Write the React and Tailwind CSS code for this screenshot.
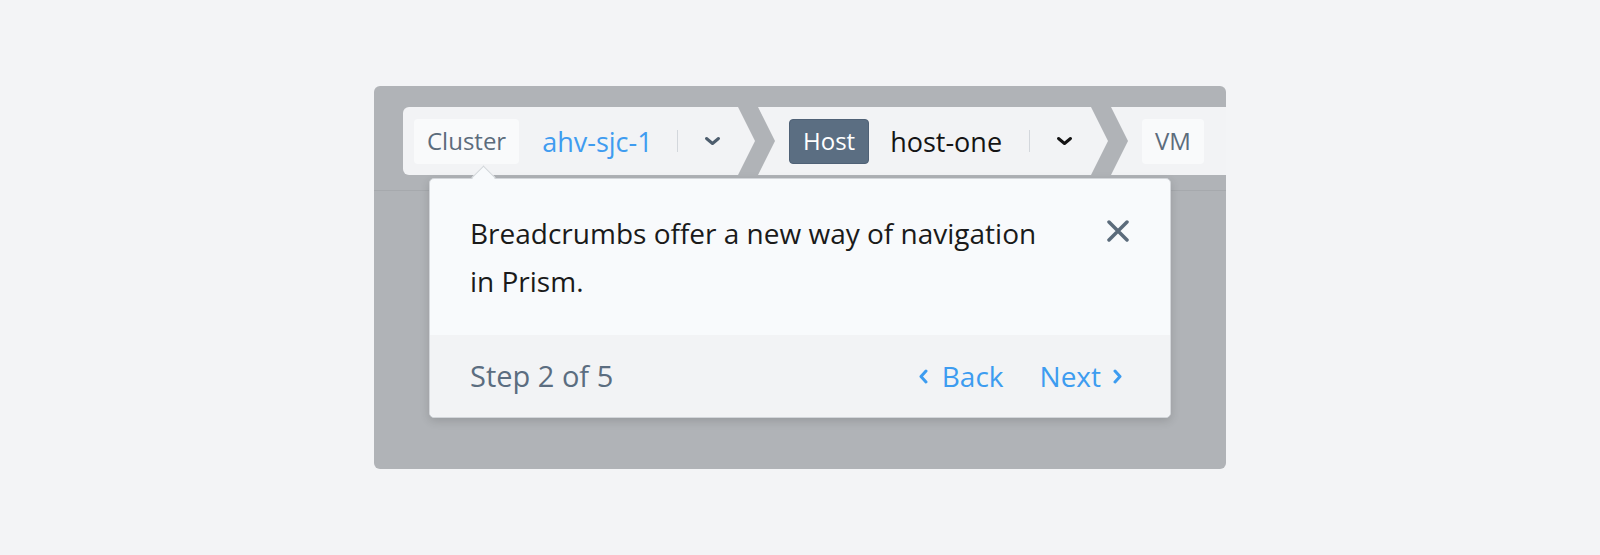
import React from 'react';

function ChevronDown({ className }) {
  return (
    <svg viewBox="0 0 17 10" className={className} fill="none" stroke="currentColor" strokeWidth="3" strokeLinecap="round" strokeLinejoin="round">
      <path d="M2.5 2.5 L8.5 7.5 L14.5 2.5" />
    </svg>
  );
}

function ChevronSide({ dir, className }) {
  return (
    <svg viewBox="0 0 11 15" className={className} fill="none" stroke="currentColor" strokeWidth="3" strokeLinecap="round" strokeLinejoin="round">
      {dir === 'left' ? <path d="M8 2 L3 7.5 L8 13" /> : <path d="M3 2 L8 7.5 L3 13" />}
    </svg>
  );
}

function CloseIcon({ className }) {
  return (
    <svg viewBox="0 0 22 22" className={className} fill="none" stroke="currentColor" strokeWidth="3.5" strokeLinecap="round">
      <path d="M2 2 L20 20 M20 2 L2 20" />
    </svg>
  );
}

export default function App() {
  return (
    <div className="w-full h-[555px] bg-[#f3f4f6] flex items-center justify-center font-['Open_Sans',sans-serif]">
      <div className="relative w-[852px] h-[383px] bg-[#b0b3b7] rounded-[6px] overflow-hidden">
        {/* header with breadcrumbs */}
        <div className="h-[105px] border-b border-[#a6a9ad] pt-[21px] pl-[29px]">
          <div className="flex h-[68px]">
            <div className="shrink-0 w-[352px] h-[68px] bg-[#f2f3f5] rounded-l-[6px] flex items-center pl-[11px] [clip-path:polygon(0_0,335px_0,352px_34px,335px_68px,0_68px)]">
              <span className="h-[45px] px-[13px] flex items-center rounded-[4px] bg-[#f9fafb] text-[24px] text-[#5c6c7c]">Cluster</span>
              <span className="ml-[23px] text-[27px] leading-none text-[#3f9cf0]">ahv-sjc-1</span>
              <span className="ml-[24px] w-px h-[22px] bg-[#d3d7dc]" />
              <ChevronDown className="ml-[26px] w-[17px] h-[10px] text-[#4d5d6d]" />
            </div>
            <div className="shrink-0 ml-[3px] w-[350px] h-[68px] bg-[#f2f3f5] flex items-center pl-[31px] [clip-path:polygon(0_0,333px_0,350px_34px,333px_68px,0_68px,17px_34px)]">
              <span className="h-[45px] px-[13px] flex items-center rounded-[4px] bg-[#5b6e82] border border-[#4f6176] text-[24px] text-white">Host</span>
              <span className="ml-[21px] text-[27px] leading-none text-[#141414]">host-one</span>
              <span className="ml-[27px] w-px h-[22px] bg-[#d3d7dc]" />
              <ChevronDown className="ml-[26px] w-[17px] h-[10px] text-[#141414]" />
            </div>
            <div className="shrink-0 ml-[3px] w-[200px] h-[68px] bg-[#f2f3f5] flex items-center pl-[31px] [clip-path:polygon(0_0,200px_0,200px_68px,0_68px,17px_34px)]">
              <span className="h-[45px] px-[13px] flex items-center rounded-[4px] bg-[#f9fafb] text-[24px] text-[#5c6c7c]">VM</span>
            </div>
          </div>
        </div>

        {/* popover */}
        <div className="absolute left-[55px] top-[92px] w-[742px] bg-[#f8fafc] border border-[#d3d6da] rounded-[5px] shadow-[0_3px_10px_rgba(0,0,0,0.14)]">
          <div className="absolute left-[45px] top-[-10px] w-[17px] h-[17px] rotate-45 bg-[#f8fafc] border-l border-t border-[#d3d6da]" />
          <div className="relative flex justify-between h-[156px] pl-[40px] pr-[41px] pt-[30px]">
            <p className="w-[578px] text-[28px] leading-[48px] text-[#1a1a1a]">Breadcrumbs offer a new way of navigation in Prism.</p>
            <button className="mt-[11px] w-[22px] h-[22px] text-[#5b6b7b]">
              <CloseIcon className="w-[22px] h-[22px]" />
            </button>
          </div>
          <div className="h-[82px] bg-[#f2f3f5] rounded-b-[5px] flex items-center justify-between pl-[40px] pr-[47px]">
            <span className="text-[29px] text-[#5b6d80]">Step 2 of 5</span>
            <div className="flex items-center text-[28px] text-[#3d9cf0]">
              <ChevronSide dir="left" className="w-[11px] h-[15px]" />
              <span className="ml-[13px]">Back</span>
              <span className="ml-[36px]">Next</span>
              <ChevronSide dir="right" className="ml-[11px] w-[11px] h-[15px]" />
            </div>
          </div>
        </div>
      </div>
    </div>
  );
}
